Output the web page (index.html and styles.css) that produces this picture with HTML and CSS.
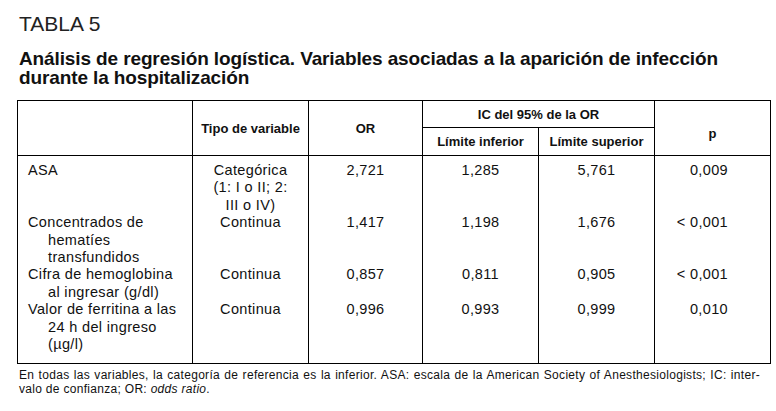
FILE: index.html
```html
<!DOCTYPE html>
<html lang="es">
<head>
<meta charset="utf-8">
<title>Tabla 5</title>
<link rel="stylesheet" href="styles.css">
</head>
<body>
<div class="page">
  <div class="label">TABLA 5</div>
  <h1 class="title">Análisis de regresión logística. Variables asociadas a la aparición de infección durante la hospitalización</h1>
  <table class="data">
    <colgroup>
      <col class="c1"><col class="c2"><col class="c3"><col class="c4"><col class="c5"><col class="c6">
    </colgroup>
    <thead>
      <tr>
        <th rowspan="2"></th>
        <th rowspan="2">Tipo de variable</th>
        <th rowspan="2">OR</th>
        <th colspan="2" class="ic">IC del 95% de la OR</th>
        <th rowspan="2" class="p">p</th>
      </tr>
      <tr>
        <th class="sub">Límite inferior</th>
        <th class="sub">Límite superior</th>
      </tr>
    </thead>
    <tbody>
      <tr class="first">
        <td class="var">ASA</td>
        <td class="type">Categórica<br>(1: I o II; 2:<br>III o IV)</td>
        <td class="num">2,721</td>
        <td class="num">1,285</td>
        <td class="num">5,761</td>
        <td class="pv">0,009</td>
      </tr>
      <tr>
        <td class="var">Concentrados de hematíes transfundidos</td>
        <td class="type">Continua</td>
        <td class="num">1,417</td>
        <td class="num">1,198</td>
        <td class="num">1,676</td>
        <td class="pv">&lt; 0,001</td>
      </tr>
      <tr>
        <td class="var">Cifra de hemoglobina al ingresar (g/dl)</td>
        <td class="type">Continua</td>
        <td class="num">0,857</td>
        <td class="num">0,811</td>
        <td class="num">0,905</td>
        <td class="pv">&lt; 0,001</td>
      </tr>
      <tr class="last">
        <td class="var">Valor de ferritina a las 24 h del ingreso (µg/l)</td>
        <td class="type">Continua</td>
        <td class="num">0,996</td>
        <td class="num">0,993</td>
        <td class="num">0,999</td>
        <td class="pv">0,010</td>
      </tr>
    </tbody>
  </table>
  <div class="note">
    <span class="note-line">En todas las variables, la categoría de referencia es la inferior. ASA: escala de la American Society of Anesthesiologists; IC: inter-</span>
    <span class="note-end">valo de confianza; OR: <em>odds ratio</em>.</span>
  </div>
</div>
</body>
</html>
```

FILE: styles.css
```css
html, body {
  margin: 0;
  padding: 0;
  background: #fff;
  color: #111;
}

.page {
  width: 776px;
  padding: 12px 0 0 0;
  box-sizing: border-box;
  font-family: "Liberation Sans", Arial, sans-serif;
}

.label {
  margin-left: 19px;
  font-size: 21px;
  line-height: 24px;
  font-weight: normal;
  color: #222;
}

.title {
  margin: 13px 0 0 19px;
  width: 740px;
  font-family: "Liberation Sans Narrow", "Liberation Sans", Arial, sans-serif;
  font-size: 19px;
  line-height: 19px;
  font-weight: bold;
  letter-spacing: -0.12px;
}

.data {
  margin: 13px 0 0 17px;
  width: 753px;
  border-collapse: collapse;
  table-layout: fixed;
  border: 1px solid #000;
}

.c1 { width: 175px; }
.c2, .c4, .c5, .c6 { width: 116px; }
.c3 { width: 114px; }

.data th {
  border: 1px solid #000;
  font-family: "Liberation Sans Narrow", "Liberation Sans", Arial, sans-serif;
  font-size: 13px;
  font-weight: bold;
  padding: 0;
  text-align: center;
  vertical-align: middle;
}

.data thead tr:first-child th { height: 26px; }
.data th.sub { height: 27px; }
.data th.p { vertical-align: middle; padding-top: 10px; }

.data td {
  border-left: 1px solid #000;
  border-right: 1px solid #000;
  font-size: 14.5px;
  line-height: 17.4px;
  letter-spacing: 0.35px;
  padding: 0;
  vertical-align: top;
}

.data tr.first td { padding-top: 6px; }
.data tr.last td { padding-bottom: 10px; }

.var {
  padding-left: 30px !important;
  padding-right: 9px !important;
  text-indent: -20px;
}

.type, .num { text-align: center; }

.pv {
  text-align: right;
  padding-right: 42px !important;
}

.note {
  margin: 5px 0 0 19px;
  width: 741px;
  font-family: "Liberation Sans Narrow", "Liberation Sans", Arial, sans-serif;
  font-size: 12px;
  line-height: 13.8px;
  letter-spacing: 0.3px;
}

.note-line {
  display: block;
  text-align: justify;
  text-align-last: justify;
}

.note-end { display: block; }
```
